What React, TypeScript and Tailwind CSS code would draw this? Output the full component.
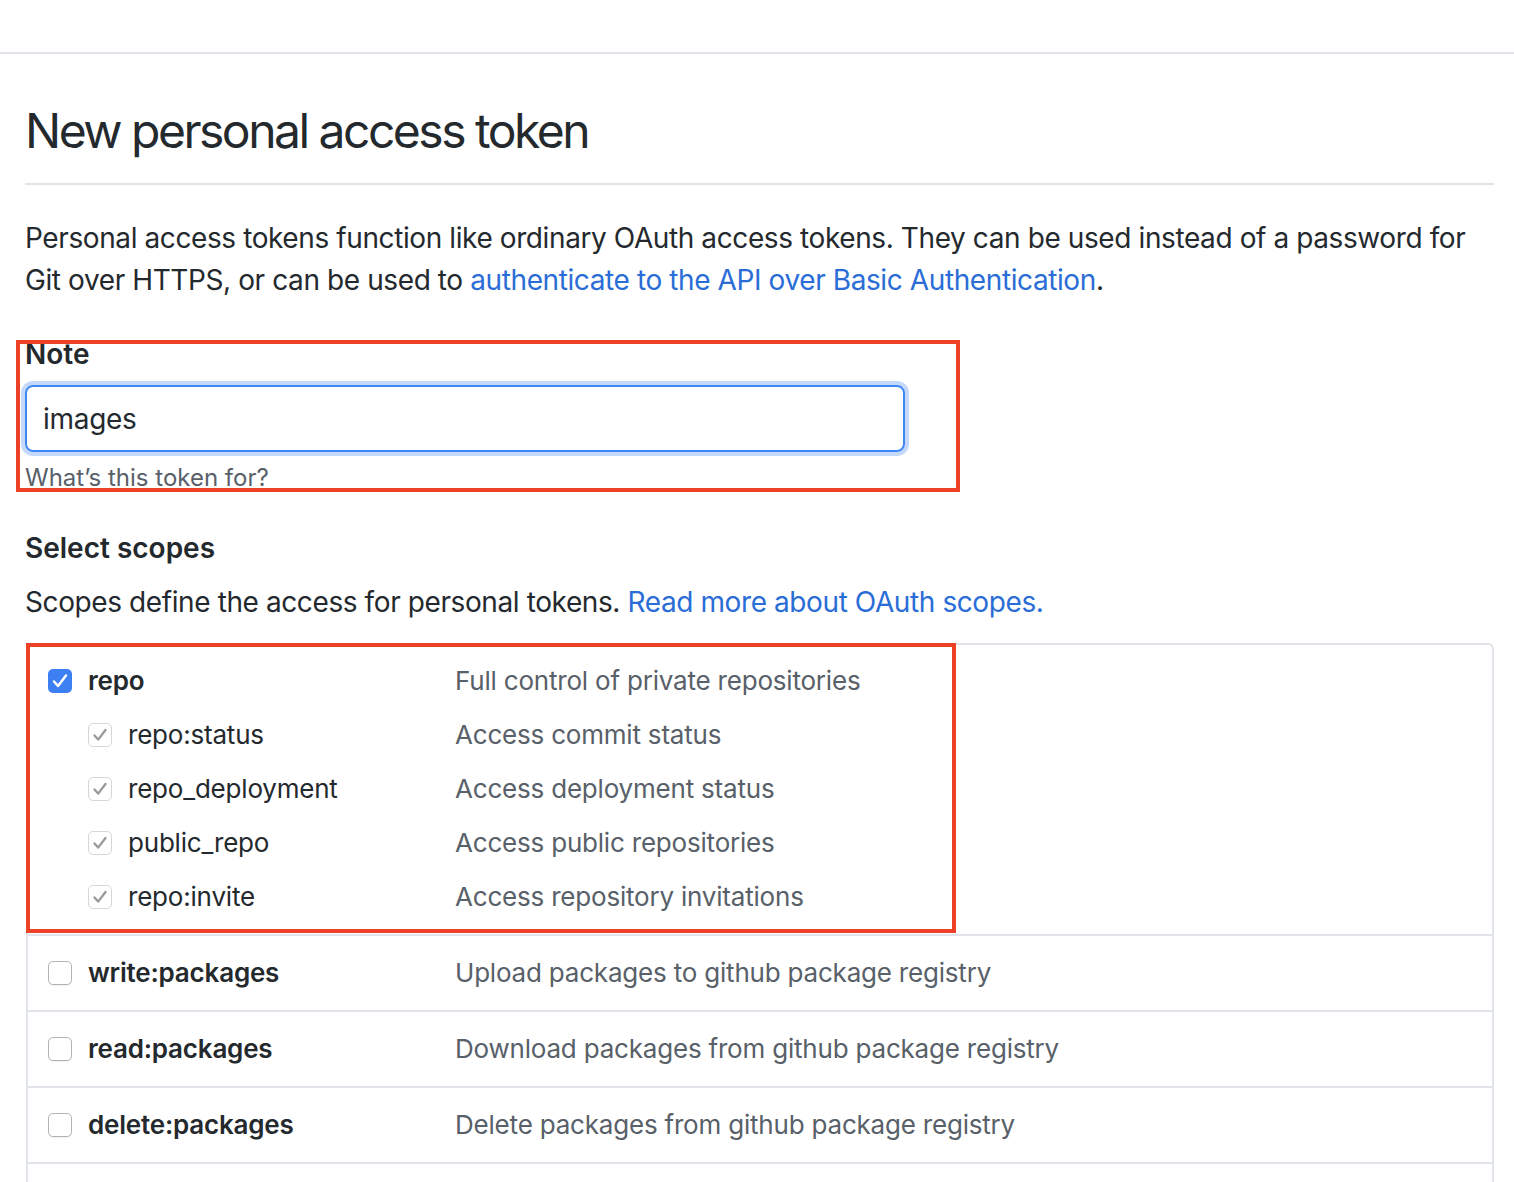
import React from "react";

function Check({ color, w }: { color: string; w: string }) {
  return (
    <svg viewBox="0 0 24 24" className="w-[24px] h-[24px]" fill="none">
      <path d="M6 12.5 L10 17 L18 6.5" stroke={color} strokeWidth={w} strokeLinecap="round" strokeLinejoin="round" />
    </svg>
  );
}

function Box({ kind }: { kind: "on" | "sub" | "off" }) {
  if (kind === "on")
    return (
      <div className="w-[24px] h-[24px] rounded-[5px] bg-[#3d80f3] flex items-center justify-center shrink-0">
        <Check color="#ffffff" w="2.5" />
      </div>
    );
  if (kind === "sub")
    return (
      <div className="w-[24px] h-[24px] rounded-[5px] bg-white border border-[#d6d6d6] flex items-center justify-center shrink-0">
        <Check color="#999999" w="2.5" />
      </div>
    );
  return <div className="w-[24px] h-[24px] rounded-[5px] bg-white border border-[#b3b3b3] shadow-[0_1px_1px_rgba(0,0,0,0.06)] shrink-0" />;
}

function Line({ kind, name, desc, sub }: { kind: "on" | "sub" | "off"; name: string; desc: string; sub?: boolean }) {
  return (
    <div className="flex items-center h-[42px]">
      <div className={"w-[407px] flex items-center gap-[16px] shrink-0 " + (sub ? "pl-[40px]" : "")}>
        <Box kind={kind} />
        <span className={sub ? "text-[#24292e]" : "font-semibold text-[#24292e]"}>{name}</span>
      </div>
      <span className="text-[#586069]">{desc}</span>
    </div>
  );
}

export default function App() {
  const subs = [
    ["repo:status", "Access commit status"],
    ["repo_deployment", "Access deployment status"],
    ["public_repo", "Access public repositories"],
    ["repo:invite", "Access repository invitations"],
  ];
  const rows = [
    ["write:packages", "Upload packages to github package registry"],
    ["read:packages", "Download packages from github package registry"],
    ["delete:packages", "Delete packages from github package registry"],
  ];
  return (
    <div className="min-h-[1182px] bg-white font-['Inter','Noto_Sans',sans-serif] text-[28px] leading-[42px] text-[#24292e] overflow-hidden">
      <div className="h-[52px]" />
      <div className="border-t-2 border-[#e1e4e8]" />
      <div className="pl-[25px] pr-[20px] pt-[41px]">
        <div className="border-b-2 border-[#e1e4e8] pb-[16px]">
          <h1 className="text-[48px] leading-[72px] font-normal tracking-[-2.5px]">New personal access token</h1>
        </div>
        <p className="mt-[32px] tracking-[-0.4px]">
          Personal access tokens function like ordinary OAuth access tokens. They can be used instead of a password for
          <br />
          Git over HTTPS, or can be used to{" "}
          <span className="text-[#2a6dd6]">authenticate to the API over Basic Authentication</span>.
        </p>

        <div className="relative mt-[32px]">
          <div className="font-semibold">Note</div>
          <div className="mt-[10px] w-[880px] h-[67px] rounded-[8px] border-2 border-[#3f87f5] shadow-[0_0_0_4px_rgba(60,130,240,0.3)] flex items-center px-[16px]">
            <span className="tracking-[-0.3px]">images</span>
          </div>
          <p className="mt-[8px] text-[24px] leading-[36px] text-[#586069]">What’s this token for?</p>
          <div className="absolute left-[-9px] top-[7px] w-[944px] h-[152px] border-4 border-[#ec4127] pointer-events-none" />
        </div>

        <div className="mt-[31px] font-semibold">Select scopes</div>
        <p className="mt-[12px] tracking-[-0.4px]">
          Scopes define the access for personal tokens.{" "}
          <span className="text-[#2a6dd6]">Read more about OAuth scopes.</span>
        </p>

        <div className="relative mt-[20px] ml-[1px] border-2 border-b-0 border-[#e1e4e8] rounded-t-[6px] text-[26px] tracking-[-0.2px]">
          <div className="pl-[20px] pt-[15px] pb-[16px] flex flex-col gap-[12px]">
            <Line kind="on" name="repo" desc="Full control of private repositories" />
            {subs.map(([n, d]) => (
              <Line key={n} kind="sub" name={n} desc={d} sub />
            ))}
          </div>
          {rows.map(([n, d]) => (
            <div key={n} className="border-t-2 border-[#e1e4e8] pl-[20px] py-[16px]">
              <Line kind="off" name={n} desc={d} />
            </div>
          ))}
          <div className="border-t-2 border-[#e1e4e8] h-[60px]" />
          <div className="absolute left-[-2px] top-[-2px] w-[930px] h-[290px] border-4 border-[#ec4127] pointer-events-none" />
        </div>
      </div>
    </div>
  );
}
